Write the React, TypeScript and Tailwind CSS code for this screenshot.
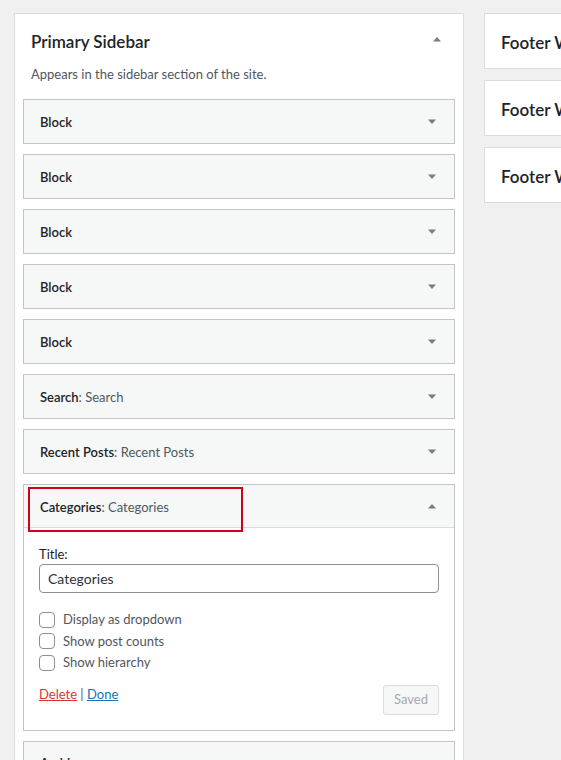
import React from 'react'

const font = { fontFamily: '"Segoe UI", Lato, "Liberation Sans", sans-serif' }

function Caret({ up = false }: { up?: boolean }) {
  return (
    <svg width="10" height="6" viewBox="0 0 10 6" className="text-[#787c82]">
      {up ? <path d="M1 5.5 L5 1 L9 5.5 Z" fill="currentColor" /> : <path d="M1 0.5 L5 5 L9 0.5 Z" fill="currentColor" />}
    </svg>
  )
}

function WidgetRow({ name, title }: { name: string; title?: string }) {
  return (
    <div className="flex h-[45px] items-center justify-between border border-[#c3c4c7] bg-[#f6f7f7] pl-[16px] pr-[17px]">
      <div className="pt-[2px] text-[13px] text-[#1d2327]">
        <span className="font-semibold">{name}</span>
        {title && <span className="text-[#50575e]">: {title}</span>}
      </div>
      <Caret />
    </div>
  )
}

function Checkbox({ label }: { label: string }) {
  return (
    <label className="flex h-[21.5px] items-center gap-[8px] text-[13px] text-[#50575e]">
      <span className="h-[16px] w-[16px] rounded-[4px] border border-[#8c8f94] bg-white" />
      {label}
    </label>
  )
}

function FooterArea() {
  return (
    <div className="flex h-[56px] items-center border border-[#dcdcde] bg-white pl-[16px] pt-[3px]">
      <h3 className="whitespace-nowrap text-[17px] font-semibold text-[#1d2327]">Footer Widget Area</h3>
    </div>
  )
}

export default function App() {
  const blocks = ['Block', 'Block', 'Block', 'Block', 'Block']
  return (
    <div className="h-[760px] w-[561px] overflow-hidden bg-[#f0f0f1]" style={font}>
      <div className="flex gap-[20px] pl-[14px] pt-[13px]">
        {/* Primary sidebar */}
        <div className="w-[450px] shrink-0 border border-[#dcdcde] bg-white pb-[20px]">
          <div className="flex items-start justify-between pl-[16px] pr-[21px] pt-[16px]">
            <h2 className="text-[17px] font-semibold leading-[24px] text-[#1d2327]">Primary Sidebar</h2>
            <div className="pt-[6px]">
              <Caret up />
            </div>
          </div>
          <p className="mt-[10px] pl-[16px] text-[13px] leading-[20px] text-[#50575e]">
            Appears in the sidebar section of the site.
          </p>
          <div className="mt-[15px] flex flex-col gap-[10px] px-[8px]">
            {blocks.map((b, i) => (
              <WidgetRow key={i} name={b} />
            ))}
            <WidgetRow name="Search" title="Search" />
            <WidgetRow name="Recent Posts" title="Recent Posts" />

            {/* Expanded Categories widget */}
            <div className="relative border border-[#c3c4c7] bg-white">
              <div className="flex h-[43px] items-center justify-between border-b border-[#dcdcde] bg-[#f6f7f7] pl-[16px] pr-[17px]">
                <div className="pt-[3px] text-[13px] text-[#1d2327]">
                  <span className="font-semibold">Categories</span>
                  <span className="text-[#50575e]">: Categories</span>
                </div>
                <Caret up />
              </div>
              <div className="absolute left-[4px] top-[2px] h-[45px] w-[215px] border-2 border-[#d0021b]" />
              <div className="px-[15px] pb-[15px] pt-[17px]">
                <div className="text-[13px] leading-[18px] text-[#1d2327]">Title:</div>
                <div className="mt-[1px] flex h-[29px] items-center rounded-[4px] border border-[#8c8f94] bg-white px-[8px] text-[14px] text-[#2c3338]">
                  Categories
                </div>
                <div className="mt-[16px] flex flex-col">
                  <Checkbox label="Display as dropdown" />
                  <Checkbox label="Show post counts" />
                  <Checkbox label="Show hierarchy" />
                </div>
                <div className="mt-[10px] flex items-start justify-between">
                  <div className="text-[13px] leading-[20px] text-[#50575e]">
                    <a className="text-[#d63638] underline">Delete</a> | <a className="text-[#2271b1] underline">Done</a>
                  </div>
                  <button className="mt-[1px] h-[30px] w-[56px] rounded-[3px] border border-[#dcdcde] bg-[#f6f7f7] text-[13px] text-[#a7aaad]">
                    Saved
                  </button>
                </div>
              </div>
            </div>
            <WidgetRow name="Archives" />
          </div>
        </div>

        {/* Footer areas */}
        <div className="flex w-[200px] shrink-0 flex-col gap-[11px]">
          <FooterArea />
          <FooterArea />
          <FooterArea />
        </div>
      </div>
    </div>
  )
}
